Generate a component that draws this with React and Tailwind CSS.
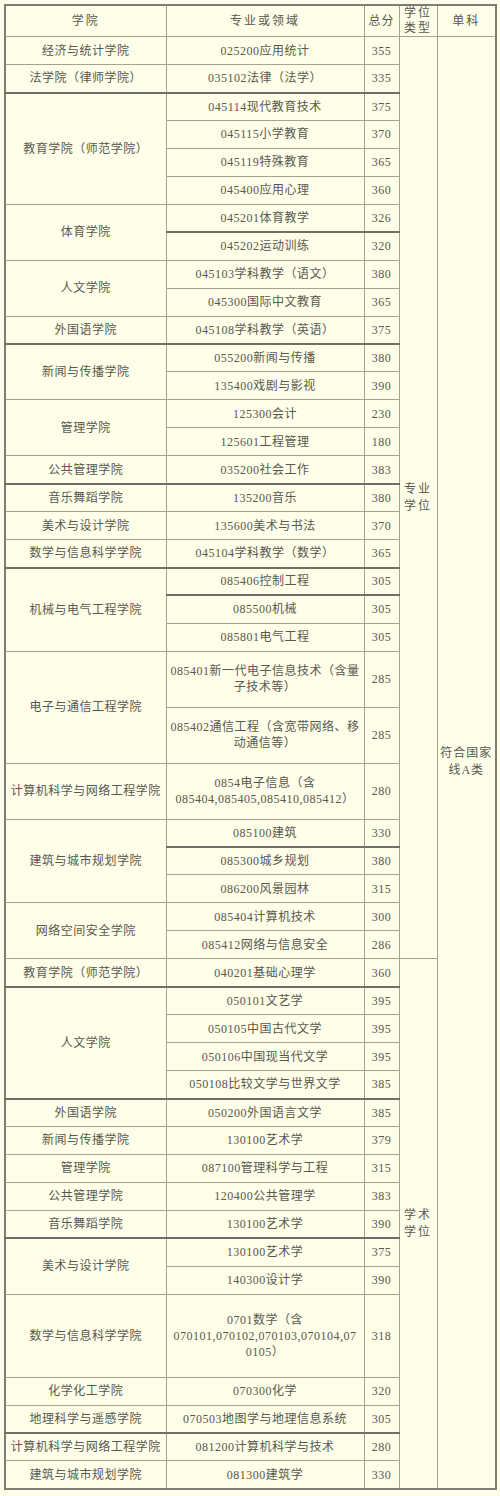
import React from "react";

const pro = [
  { college: "经济与统计学院", items: [["025200应用统计", "355"]] },
  { college: "法学院（律师学院）", items: [["035102法律（法学）", "335"]] },
  {
    college: "教育学院（师范学院）",
    thick: true,
    items: [
      ["045114现代教育技术", "375"],
      ["045115小学教育", "370"],
      ["045119特殊教育", "365"],
      ["045400应用心理", "360"],
    ],
  },
  {
    college: "体育学院",
    items: [
      ["045201体育教学", "326"],
      ["045202运动训练", "320", true],
    ],
  },
  {
    college: "人文学院",
    items: [
      ["045103学科教学（语文）", "380"],
      ["045300国际中文教育", "365"],
    ],
  },
  { college: "外国语学院", items: [["045108学科教学（英语）", "375"]] },
  {
    college: "新闻与传播学院",
    thick: true,
    items: [
      ["055200新闻与传播", "380"],
      ["135400戏剧与影视", "390"],
    ],
  },
  {
    college: "管理学院",
    items: [
      ["125300会计", "230"],
      ["125601工程管理", "180"],
    ],
  },
  { college: "公共管理学院", items: [["035200社会工作", "383"]] },
  { college: "音乐舞蹈学院", thick: true, items: [["135200音乐", "380"]] },
  { college: "美术与设计学院", items: [["135600美术与书法", "370"]] },
  { college: "数学与信息科学学院", items: [["045104学科教学（数学）", "365"]] },
  {
    college: "机械与电气工程学院",
    thick: true,
    items: [
      ["085406控制工程", "305"],
      ["085500机械", "305", true],
      ["085801电气工程", "305"],
    ],
  },
  {
    college: "电子与通信工程学院",
    items: [
      [["085401新一代电子信息技术（含量", "子技术等）"], "285", false, 56],
      [["085402通信工程（含宽带网络、移", "动通信等）"], "285", false, 56],
    ],
  },
  {
    college: "计算机科学与网络工程学院",
    items: [[["0854电子信息（含", "085404,085405,085410,085412）"], "280", false, 56]],
  },
  {
    college: "建筑与城市规划学院",
    items: [
      ["085100建筑", "330"],
      ["085300城乡规划", "380", true],
      ["086200风景园林", "315"],
    ],
  },
  {
    college: "网络空间安全学院",
    items: [
      ["085404计算机技术", "300"],
      ["085412网络与信息安全", "286"],
    ],
  },
];

const aca = [
  { college: "教育学院（师范学院）", items: [["040201基础心理学", "360"]] },
  {
    college: "人文学院",
    thick: true,
    items: [
      ["050101文艺学", "395"],
      ["050105中国古代文学", "395"],
      ["050106中国现当代文学", "395"],
      ["050108比较文学与世界文学", "385"],
    ],
  },
  { college: "外国语学院", thick: true, items: [["050200外国语言文学", "385"]] },
  { college: "新闻与传播学院", items: [["130100艺术学", "379"]] },
  { college: "管理学院", items: [["087100管理科学与工程", "315"]] },
  { college: "公共管理学院", items: [["120400公共管理学", "383"]] },
  { college: "音乐舞蹈学院", items: [["130100艺术学", "390"]] },
  {
    college: "美术与设计学院",
    thick: true,
    items: [
      ["130100艺术学", "375"],
      ["140300设计学", "390"],
    ],
  },
  {
    college: "数学与信息科学学院",
    items: [[["0701数学（含", "070101,070102,070103,070104,07", "0105）"], "318", false, 83]],
  },
  { college: "化学化工学院", items: [["070300化学", "320"]] },
  { college: "地理科学与遥感学院", items: [["070503地图学与地理信息系统", "305"]] },
  { college: "计算机科学与网络工程学院", thick: true, items: [["081200计算机科学与技术", "280"]] },
  { college: "建筑与城市规划学院", items: [["081300建筑学", "330"]] },
];

const cell = "border border-[#a3a394] text-center align-middle p-0 whitespace-nowrap";
const thickTop = "border-t-2 border-t-[#6f6f66]";

function Lines({ text }) {
  if (Array.isArray(text))
    return text.map((t, i) => (
      <div key={i} className="leading-[16px]">
        {t}
      </div>
    ));
  return text;
}

function buildRows(groups, first, typeLabel, typeSpan) {
  const rows = [];
  groups.forEach((g, gi) => {
    const span = g.items.length;
    g.items.forEach(([name, score, innerThick, h = 28], ii) => {
      const top = ii === 0 ? g.thick : innerThick;
      const tc = top ? thickTop : "";
      // thick top border eats part of the row
      const rowH = top ? h - 0.25 : h;
      rows.push(
        <tr key={typeLabel + gi + "-" + ii} style={{ height: rowH }}>
          {ii === 0 && (
            <td rowSpan={span} className={`${cell} ${g.thick ? thickTop : ""}`}>
              {g.college}
            </td>
          )}
          <td className={`${cell} ${tc}`}>
            <Lines text={name} />
          </td>
          <td className={`${cell} ${tc}`}>{score}</td>
          {gi === 0 && ii === 0 && (
            <td rowSpan={typeSpan} className={cell}>
              <div className="leading-[17px] tracking-[2px]">
                {typeLabel[0]}
                <br />
                {typeLabel[1]}
              </div>
            </td>
          )}
          {first && gi === 0 && ii === 0 && (
            <td rowSpan={47} className={cell}>
              <div className="leading-[17px] tracking-[1px]">
                符合国家
                <br />
                线A类
              </div>
            </td>
          )}
        </tr>
      );
    });
  });
  return rows;
}

export default function App() {
  return (
    <div
      className="w-[500px] h-[1496px] bg-[#fefee9] pt-[4px] pl-[4px] text-[12px] tracking-[0.5px] text-[#58584f]"
      style={{ fontFamily: '"Liberation Serif", "Noto Sans CJK SC", serif' }}
    >
      <table className="table-fixed border-collapse w-[491px] border-2 border-[#7d7d74]">
        <colgroup>
          <col className="w-[161px]" />
          <col className="w-[198px]" />
          <col className="w-[35px]" />
          <col className="w-[38px]" />
          <col className="w-[59px]" />
        </colgroup>
        <thead>
          <tr style={{ height: 30 }}>
            <th className={`${cell} font-normal tracking-[2px]`}>学院</th>
            <th className={`${cell} font-normal tracking-[2px]`}>专业或领域</th>
            <th className={`${cell} font-normal tracking-[1px]`}>总分</th>
            <th className={`${cell} font-normal tracking-[2px]`}>
              <div className="leading-[15px]">
                学位
                <br />
                类型
              </div>
            </th>
            <th className={`${cell} font-normal tracking-[2px]`}>单科</th>
          </tr>
        </thead>
        <tbody>
          {buildRows(pro, true, ["专业", "学位"], 30)}
          {buildRows(aca, false, ["学术", "学位"], 17)}
        </tbody>
      </table>
    </div>
  );
}
